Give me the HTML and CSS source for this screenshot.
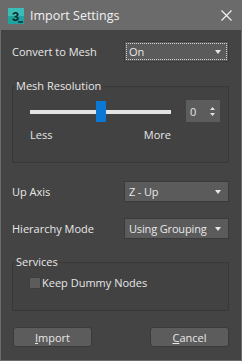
FILE: index.html
```html
<!DOCTYPE html>
<html>
<head>
<meta charset="utf-8">
<link rel="stylesheet" href="styles.css">
</head>
<body>
<div class="window">
  <div class="titlebar">
    <svg class="app-icon" width="16" height="16" viewBox="0 0 16 16">
      <rect x="0" y="0" width="16" height="16" fill="#1fa3a0"/>
      <rect x="0" y="0" width="16" height="8" fill="#3bbcb6"/>
      <text x="4" y="12.5" font-family="Liberation Sans, sans-serif" font-weight="bold" font-size="13" fill="#0d2b2b">3</text>
      <rect x="10" y="13" width="5" height="2" fill="#0d4a48"/>
    </svg>
    <span class="title">Import Settings</span>
    <svg class="close" width="11" height="11" viewBox="0 0 11 11">
      <path d="M0.5 0.5 L10.5 10.5 M10.5 0.5 L0.5 10.5" stroke="#f0f0f0" stroke-width="1.2"/>
    </svg>
  </div>
  <div class="content">
    <div class="row first">
      <span class="label">Convert to Mesh</span>
      <div class="select focused"><span>On</span><span class="arrow"></span></div>
    </div>
    <fieldset class="group res">
      <legend>Mesh Resolution</legend>
      <div class="group-body">
        <div class="slider-row">
          <div class="slider">
            <div class="track"></div>
            <div class="thumb"></div>
          </div>
          <div class="spin"><span>0</span>
            <svg width="5" height="9" viewBox="0 0 5 9"><path d="M2.5 0 L5 3 L0 3 Z M2.5 9 L5 6 L0 6 Z" fill="#e0e0e0"/></svg>
          </div>
        </div>
        <div class="ticks"><span>Less</span><span>More</span></div>
      </div>
    </fieldset>
    <div class="row axis">
      <span class="label">Up Axis</span>
      <div class="select"><span>Z - Up</span><span class="arrow"></span></div>
    </div>
    <div class="row hier">
      <span class="label">Hierarchy Mode</span>
      <div class="select"><span>Using Grouping</span><span class="arrow"></span></div>
    </div>
    <fieldset class="group services">
      <legend>Services</legend>
      <div class="group-body">
        <label class="check"><span class="box"></span>Keep Dummy Nodes</label>
      </div>
    </fieldset>
    <div class="buttons">
      <div class="btn"><u>I</u>mport</div>
      <div class="btn"><u>C</u>ancel</div>
    </div>
  </div>
</div>
</body>
</html>
```
FILE: styles.css
```css
* { box-sizing: border-box; }
html, body { margin: 0; padding: 0; background: #444444; }
body { font-family: "Open Sans", "Noto Sans", sans-serif; font-size: 11px; color: #e6e6e6; }
.window {
  width: 242px; height: 361px;
  background: #444444;
  border: 1px solid #6b6b6b;
  border-top: 0;
  display: flex; flex-direction: column;
}
.titlebar {
  height: 30px; background: #6b6b6b;
  display: flex; align-items: center;
  padding: 0 10px 0 8px;
  margin: 0 -1px;
}
.app-icon { flex: none; margin-top: 1px; }
.title { margin-left: 6px; font-size: 12.5px; color: #f2f2f2; flex: 1; }
.close { flex: none; }
.content { padding: 11px 12px 0 11px; display: flex; flex-direction: column; }
.row { display: flex; align-items: center; justify-content: space-between; height: 21px; }
.label { color: #e8e8e8; }
.select {
  width: 105px; height: 21px; background: #5b5b5b;
  border: 1px solid #3a3a3a;
  display: flex; align-items: center; justify-content: space-between;
  padding: 0 7px 0 4px; color: #e8e8e8; letter-spacing: -0.15px;
}
.select.focused { outline: 1px dotted #d0d0d0; outline-offset: -3px; }
.arrow { width: 0; height: 0; border-left: 3px solid transparent; border-right: 3px solid transparent; border-top: 4px solid #e8e8e8; }
.group {
  margin: 0; border: 1px solid #383838; border-radius: 2px;
  padding: 0; min-width: 0; background: #424242;
}
.group legend { padding: 0 1px; margin-left: 2px; line-height: 14px; color: #e8e8e8; }
.res { margin-top: 17px; height: 84px; }
.res .group-body { padding: 8px 8px 0 17px; }
.slider-row { display: flex; align-items: center; gap: 15px; }
.slider { position: relative; width: 141px; height: 21px; display: flex; align-items: center; }
.track { width: 100%; height: 4px; background: #e3e3e3; }
.thumb { position: absolute; left: 66px; top: 0; width: 10px; height: 21px; background: #0a78d4; }
.spin {
  width: 34px; height: 22px; background: #5c5c5c;
  display: flex; align-items: center; justify-content: space-between;
  padding: 0 5px 0 4px; margin-top: -1px;
}
.ticks { width: 141px; display: flex; justify-content: space-between; margin-top: 5px; }
.axis { margin-top: 18px; }
.hier { margin-top: 16px; }
.services { margin-top: 16px; height: 56px; }
.services .group-body { padding: 6px 0 0 16px; }
.check { display: flex; align-items: center; gap: 1px; }
.box { width: 12px; height: 12px; background: #5c5c5c; border: 1px solid #3e3e3e; }
.buttons { display: flex; justify-content: space-between; margin-top: 16px; padding-left: 1px; }
.btn {
  width: 79px; height: 20px; background: #5c5c5c; border: 1px solid #3a3a3a;
  border-radius: 3px; display: flex; align-items: center; justify-content: center;
  color: #e8e8e8;
}
```
